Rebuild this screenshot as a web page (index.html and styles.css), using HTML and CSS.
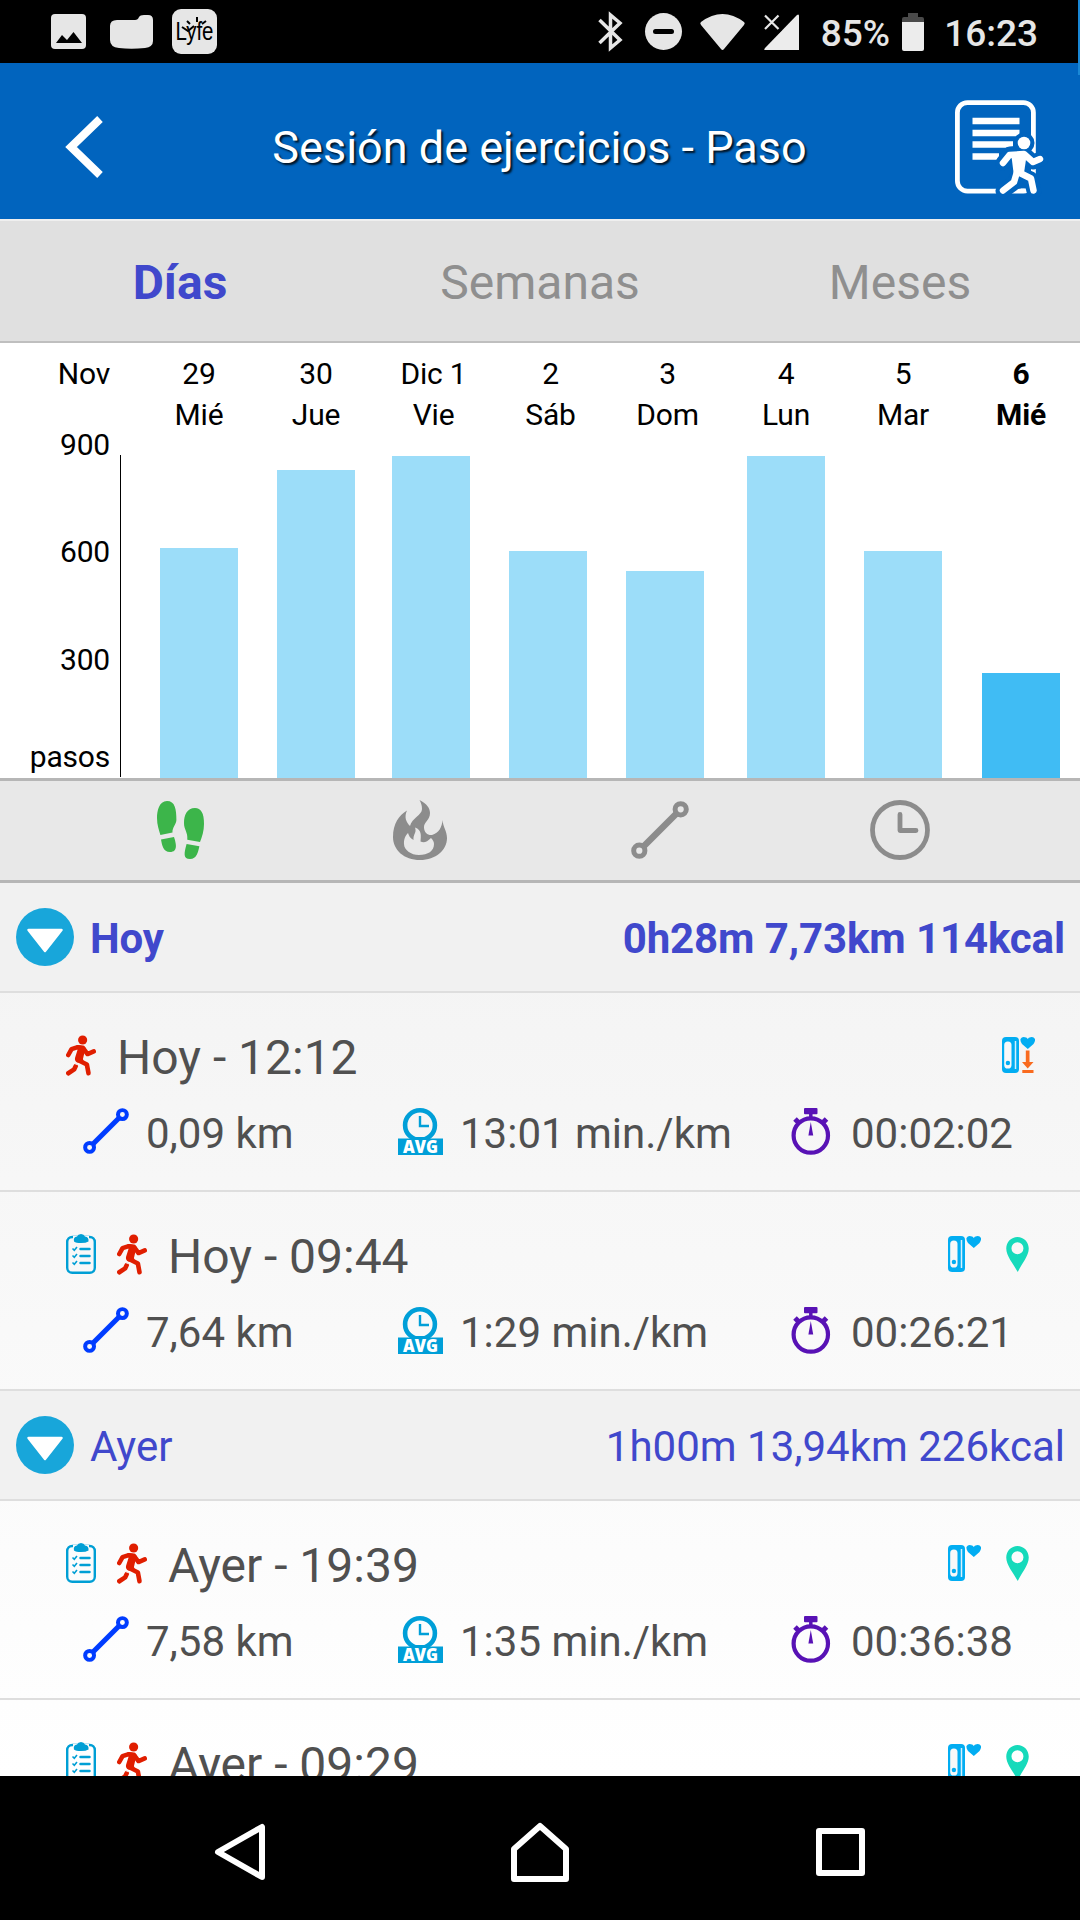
FILE: index.html
```html
<!DOCTYPE html>
<html lang="es">
<head>
    <meta charset="UTF-8">
    <meta name="viewport" content="width=device-width, initial-scale=1.0">
    <title>Sesión de ejercicios - Paso</title>
    <link rel="stylesheet" href="styles.css">
</head>
<body>
    <!-- shared icons -->
    <svg class="sprite">
        <symbol id="route" viewBox="0 0 58 58">
            <path d="M12 46L46 12" stroke="currentColor" stroke-width="6.5"/>
            <circle cx="8.3" cy="49.7" r="5.6" fill="none" stroke="currentColor" stroke-width="5"/>
            <circle cx="49.7" cy="8.3" r="5.6" fill="none" stroke="currentColor" stroke-width="5"/>
        </symbol>
        <symbol id="arrow" viewBox="0 0 58 58">
            <circle cx="29" cy="29" r="29" fill="#18a6da"/>
            <path d="M12.500 22H45.500L29 43z" fill="#fff" stroke="#fff" stroke-width="2.500" stroke-linejoin="round"/>
        </symbol>
        <symbol id="runner" viewBox="0 0 92 123">
            <circle cx="51" cy="14" r="14" fill="currentColor"/>
            <g fill="none" stroke="currentColor" stroke-width="14" stroke-linecap="round" stroke-linejoin="round">
                <path d="M7 60L17 42L36 36L52 38L66 57L85 49"/>
                <path d="M38 76L64 89L69 116"/>
                <path d="M30 94L25 104L7 116"/>
            </g>
            <path d="M31 31Q48 27 60 38L52 72L56 84L34 83Q25 78 28 68L36 42z" fill="currentColor"/>
            <path d="M20 84L44 93" stroke="#f9f9f9" stroke-width="3"/>
        </symbol>
        <symbol id="clipboard" viewBox="0 0 30 40">
            <rect x="1.200" y="3" width="27.600" height="35.800" rx="5" fill="none" stroke="#009fd5" stroke-width="2.400"/>
            <path d="M7 2H23V8H7z" fill="#f9f9f9"/>
            <path d="M8 7.500Q7 3 11 2.500Q12 0 15 0Q18 0 19 2.500Q23 3 22.500 7.500Q20 9 15 9Q10 9 8 7.500z" fill="#009fd5"/>
            <path d="M14.500 15H23.500M14.500 22H23.500M14.500 29H23.500" stroke="#009fd5" stroke-width="2.500" stroke-linecap="round"/>
            <path d="M6.500 14.500L8.300 16.300L11 13M6.500 21.500L8.300 23.300L11 20M6.500 28.500L8.300 30.300L11 27" fill="none" stroke="#009fd5" stroke-width="1.600"/>
        </symbol>
        <symbol id="avg" viewBox="0 0 45 47">
            <circle cx="22" cy="17.200" r="14.900" fill="none" stroke="#009fd8" stroke-width="4.600"/>
            <path d="M22 8V18H31" fill="none" stroke="#009fd8" stroke-width="2.400"/>
            <path d="M0 30.500H14L11 28L14 29H30L33 28L31 30.500H45V47H0z" fill="#009fd8"/>
            <text class="avg-text" x="22.500" y="44.700" text-anchor="middle" textLength="35" lengthAdjust="spacingAndGlyphs">AVG</text>
        </symbol>
        <symbol id="stopwatch" viewBox="0 0 46 47">
            <circle cx="22.800" cy="27.500" r="17.200" fill="none" stroke="currentColor" stroke-width="4.200"/>
            <rect x="16" y="0" width="13.500" height="6.200" rx="1" fill="currentColor"/>
            <path d="M22.800 5V9" stroke="currentColor" stroke-width="3.500"/>
            <path d="M7 11L11 15M38.500 11L34.500 15" stroke="currentColor" stroke-width="5"/>
            <path d="M22.800 14L25.200 27.500H20.400z" fill="currentColor"/>
        </symbol>
        <symbol id="band" viewBox="0 0 33 36">
            <rect width="17" height="36" rx="4" fill="#02adf2"/>
            <rect x="2.200" y="4.500" width="7.300" height="27" rx="3.600" fill="#f8f8f8"/>
            <path d="M13.500 4V32" stroke="#d6f1fc" stroke-width="1.500"/>
            <circle cx="5.900" cy="26" r="2.200" fill="#02adf2"/>
            <path d="M25.800 12L20 7Q18 4 18.500 2Q20 -0.500 23 0.300Q25 0.500 25.800 2Q26.500 0.500 28.500 0.300Q31.500 -0.500 33 2Q33.500 4 31.500 7z" fill="#02adf2"/>
        </symbol>
        <symbol id="pin" viewBox="0 0 22.500 35">
            <path fill-rule="evenodd" d="M11.200 0C17.500 0 22.500 5 22.500 11.500C22.500 19 16 26 11.500 35C6.500 26 0 19 0 11.500C0 5 5 0 11.200 0zM11.200 5.300A6 6 0 1 0 11.200 17.300A6 6 0 1 0 11.200 5.300z" fill="#16dabb"/>
        </symbol>
    </svg>

    <div class="status">
        <svg class="st-pic" viewBox="0 0 35 35"><rect width="35" height="35" rx="4" fill="#e6e6e6"/><path d="M5 29L11 21L16 26L22.500 18L31 29z" fill="#000"/></svg>
        <svg class="st-folder" viewBox="0 0 43 34"><path d="M0 11Q0 5 7 5H25Q28 5 29 2Q30 0 34 0H38Q43 0 43 5V26Q43 32 35 33Q21 34.500 9 33Q0 32 0 25z" fill="#e6e6e6"/></svg>
        <svg class="st-lyfe" viewBox="0 0 45 45">
            <rect width="45" height="45" rx="9" fill="#e6e6e6"/>
            <text class="lyfe-text" x="3.500" y="31" textLength="38" lengthAdjust="spacingAndGlyphs">Lyfe</text>
            <path d="M15 12L18 15M25 8V13M34 12L30 15M10 18L16 22L22 17" stroke="#000" stroke-width="2" fill="none"/>
        </svg>
        <div class="st-right">
            <svg class="st-bt" viewBox="0 0 24 37"><path d="M1.500 7L22 27L12.500 35V2L22 10L1.500 30" fill="none" stroke="#e6e6e6" stroke-width="3.500"/></svg>
            <svg class="st-dnd" viewBox="0 0 37 37"><circle cx="18.500" cy="18.500" r="18.500" fill="#e6e6e6"/><path d="M10.500 18.500H26.500" stroke="#000" stroke-width="5" stroke-linecap="round"/></svg>
            <svg class="st-wifi" viewBox="0 0 45 36"><path d="M1 8Q22.500 -8 44 8Q45.500 9 44 11L24 35Q22.500 37 21 35L1 11Q-0.500 9 1 8z" fill="#e6e6e6"/></svg>
            <svg class="st-signal" viewBox="0 0 35 36"><path d="M33 1Q35 -0.500 35 2V36H1Q-0.500 36 1 34z" fill="#ececec"/><path d="M0 0H18V16L14.500 19.500L0 16z" fill="#000"/><path d="M1 1.500L14.500 15M14.500 1.500L1 15" stroke="#e6e6e6" stroke-width="2.200"/></svg>
            <span class="st-percent">85%</span>
            <svg class="st-batt" viewBox="0 0 22 38"><path d="M0 10V6Q0 4 2 4H6V0H16V4H20Q22 4 22 6V10z" fill="#4a4a4a"/><path d="M0 9H22V36Q22 38 20 38H2Q0 38 0 36z" fill="#ececec"/></svg>
            <span class="st-time">16:23</span>
        </div>
    </div>

    <div class="header">
        <svg class="back" viewBox="0 0 38 62"><path d="M34 3L5 31L34 59" fill="none" stroke="#fff" stroke-width="8"/></svg>
        <h1 class="title">Sesión de ejercicios - Paso</h1>
        <svg class="plan" viewBox="0 0 89 95">
            <rect x="2.400" y="2.600" width="76" height="88.500" rx="10" fill="none" stroke="#fff" stroke-width="4.800"/>
            <path d="M17.500 21H64.500M17.500 33H64.500M17.500 44.500H58M17.500 56.500H44" stroke="#fff" stroke-width="6.500"/>
            <!-- gap around the runner -->
            <g fill="none" stroke="#0164be" stroke-width="15" stroke-linecap="round" stroke-linejoin="round">
                <path d="M48 63L55 54L68 53L78 62L86 59M65 55L63 73L76 79L79 91M63 74L60 82L48 91"/>
                <circle cx="69" cy="43" r="3"/>
            </g>
            <circle cx="69" cy="43" r="6.300" fill="#fff"/>
            <g fill="none" stroke="#fff" stroke-width="6.500" stroke-linecap="round" stroke-linejoin="round">
                <path d="M48 63L54.500 55L69 54L78 62L85 59"/>
                <path d="M63 72L76 78.500L78.500 90.500"/>
                <path d="M62 72L59 82L48 90.500"/>
            </g>
            <path d="M56 53L72 53L69 73L59 76z" fill="#fff"/>
            <path d="M59 93L66 88.500H69.500V93z" fill="#fff"/>
        </svg>
    </div>

    <div class="tabs">
        <div class="tab active">Días</div>
        <div class="tab">Semanas</div>
        <div class="tab">Meses</div>
    </div>

    <div class="chart">
        <div class="axis">
            <div class="axis-month">Nov</div>
            <div class="axis-900">900</div>
            <div class="axis-600">600</div>
            <div class="axis-300">300</div>
            <div class="axis-unit">pasos</div>
        </div>
        <div class="axis-line"></div>
        <div class="days">
            <div class="day"><span>29</span><span>Mié</span><div class="bar" style="height: 230px"></div></div>
            <div class="day"><span>30</span><span>Jue</span><div class="bar" style="height: 308px"></div></div>
            <div class="day nudge"><span>Dic 1</span><span>Vie</span><div class="bar" style="height: 322px"></div></div>
            <div class="day nudge"><span>2</span><span>Sáb</span><div class="bar" style="height: 227px"></div></div>
            <div class="day nudge"><span>3</span><span>Dom</span><div class="bar" style="height: 207px"></div></div>
            <div class="day"><span>4</span><span>Lun</span><div class="bar" style="height: 322px"></div></div>
            <div class="day"><span>5</span><span>Mar</span><div class="bar" style="height: 227px"></div></div>
            <div class="day today"><span>6</span><span>Mié</span><div class="bar" style="height: 105px"></div></div>
        </div>
    </div>

    <div class="metrics">
        <svg class="m-steps" viewBox="0 0 47 58" fill="#3cb54a">
            <path d="M3.400 34L15.500 31.500C15 27 19.400 23 19.400 19C19.400 8 18 0 10 0C2 0 0 10 0 17C0 24 2 29 3.400 34z"/>
            <path d="M4 38.500L17 36C19 42 21.500 51 13 51C6 51 5 44 4 38.500z"/>
            <path d="M30.300 38.700L43 41C45 36 47 30 47 23C47 12 44 7 38 7C30 7 27 14 27 22C27 29 31 31 30.300 38.700z"/>
            <path d="M29.600 43L42.400 45.300C41 51 40 58 33 58C26 58 27 52 29.600 43z"/>
        </svg>
        <svg class="m-fire" viewBox="0 0 54 60">
            <path fill-rule="evenodd" fill="#8c8c8c" d="M26.500 0C34 4 37 8 37 13C37 20 31 22 31 27C31 33 35 35.500 39 35C46 33 49 27 49.500 20C50 27 54 31 54 38C54 50 43 60 27 60C11 60 0 50 0 37C0 24 6 15 14 10.500C11 17 13 22 17 26C19 18 29 15 29 9C29 5 28 3 26.500 0zM15 33C11 37 11 41 11 44C11 50 18 55 26 55C35 55 41 51 41 44C41 42 40 40 38 38C34 42 31 43 27.500 41.500C28 36 29 30 22 27.500C24 33 20 34 20.500 40C17 38 16 36 15 33z"/>
        </svg>
        <svg class="m-route"><use href="#route"/></svg>
        <svg class="m-clock" viewBox="0 0 60 60" fill="none" stroke="#8c8c8c" stroke-width="4.800" stroke-linecap="round" stroke-linejoin="round">
            <circle cx="30" cy="30" r="27.500"/>
            <path d="M30 14.500V30.500H46"/>
        </svg>
    </div>

    <div class="list">
        <div class="group bold">
            <svg class="toggle"><use href="#arrow"/></svg>
            <span>Hoy</span>
            <span class="total">0h28m 7,73km 114kcal</span>
        </div>
        <div class="session">
            <div class="top">
                <svg class="run"><use href="#runner"/></svg>
                <span class="name">Hoy - 12:12</span>
                <svg class="band" viewBox="0 0 33 36">
                    <use href="#band"/>
                    <path d="M23.800 13.500H27.500V25H31.500L25.700 31.500L20 25H23.800zM20.300 33H31.500V36H20.300z" fill="#f96b1f"/>
                </svg>
            </div>
            <div class="stats">
                <div class="stat"><svg class="i-route"><use href="#route"/></svg><span>0,09 km</span></div>
                <div class="stat"><svg class="i-avg"><use href="#avg"/></svg><span>13:01 min./km</span></div>
                <div class="stat"><svg class="i-watch"><use href="#stopwatch"/></svg><span>00:02:02</span></div>
            </div>
        </div>
        <div class="session">
            <div class="top">
                <svg class="clip"><use href="#clipboard"/></svg>
                <svg class="run"><use href="#runner"/></svg>
                <span class="name">Hoy - 09:44</span>
                <svg class="band"><use href="#band"/></svg>
                <svg class="pin"><use href="#pin"/></svg>
            </div>
            <div class="stats">
                <div class="stat"><svg class="i-route"><use href="#route"/></svg><span>7,64 km</span></div>
                <div class="stat"><svg class="i-avg"><use href="#avg"/></svg><span>1:29 min./km</span></div>
                <div class="stat"><svg class="i-watch"><use href="#stopwatch"/></svg><span>00:26:21</span></div>
            </div>
        </div>
        <div class="group">
            <svg class="toggle"><use href="#arrow"/></svg>
            <span>Ayer</span>
            <span class="total">1h00m 13,94km 226kcal</span>
        </div>
        <div class="session">
            <div class="top">
                <svg class="clip"><use href="#clipboard"/></svg>
                <svg class="run"><use href="#runner"/></svg>
                <span class="name">Ayer - 19:39</span>
                <svg class="band"><use href="#band"/></svg>
                <svg class="pin"><use href="#pin"/></svg>
            </div>
            <div class="stats">
                <div class="stat"><svg class="i-route"><use href="#route"/></svg><span>7,58 km</span></div>
                <div class="stat"><svg class="i-avg"><use href="#avg"/></svg><span>1:35 min./km</span></div>
                <div class="stat"><svg class="i-watch"><use href="#stopwatch"/></svg><span>00:36:38</span></div>
            </div>
        </div>
        <div class="session">
            <div class="top">
                <svg class="clip"><use href="#clipboard"/></svg>
                <svg class="run"><use href="#runner"/></svg>
                <span class="name">Ayer - 09:29</span>
                <svg class="band"><use href="#band"/></svg>
                <svg class="pin"><use href="#pin"/></svg>
            </div>
        </div>
    </div>

    <div class="navbar">
        <svg viewBox="0 0 60 60"><path d="M52 5V55L8 30z"/></svg>
        <svg viewBox="0 0 60 60"><path d="M4 57V27L30 4L56 27V57z"/></svg>
        <svg viewBox="0 0 60 60"><path d="M9 9H52V51H9z"/></svg>
    </div>
    <div class="edge"></div>
</body>
</html>
```
FILE: styles.css
```css
* {
    margin: 0;
    padding: 0;
    box-sizing: border-box;
}
body {
    width: 1080px;
    height: 1920px;
    display: flex;
    flex-direction: column;
    position: relative;
    overflow: hidden;
    background: #fff;
    font-family: Roboto, sans-serif;
}
svg {
    display: block;
    flex: none;
    overflow: visible;
}
.sprite {
    position: absolute;
    width: 0;
    height: 0;
}

/* status bar */
.status {
    height: 63px;
    flex: none;
    display: flex;
    align-items: center;
    padding: 0 42px 0 51px;
    background: #000;
    color: #e6e6e6;
    font-size: 37px;
    font-weight: 500;
}
.st-pic {
    width: 35px;
    height: 35px;
}
.st-folder {
    width: 43px;
    height: 34px;
    margin-left: 24px;
}
.st-lyfe {
    width: 45px;
    height: 45px;
    margin-left: 19px;
}
.lyfe-text {
    font: 25px "Liberation Sans", sans-serif;
}
.st-right {
    display: flex;
    align-items: center;
    margin-left: auto;
}
.st-bt {
    width: 24px;
    height: 37px;
}
.st-dnd {
    width: 37px;
    height: 37px;
    margin-left: 23px;
}
.st-wifi {
    width: 45px;
    height: 36px;
    margin-left: 18px;
}
.st-signal {
    width: 35px;
    height: 36px;
    margin-left: 19px;
}
.st-percent {
    margin-left: 22px;
    padding-top: 4px;
}
.st-batt {
    width: 22px;
    height: 38px;
    margin-left: 12px;
}
.st-time {
    margin-left: 20px;
    padding-top: 4px;
}

/* header */
.header {
    height: 158px;
    flex: none;
    display: flex;
    align-items: center;
    padding: 0 36px 0 66px;
    background: #0164be;
    border-bottom: 2px solid #efefef;
}
.back {
    width: 38px;
    height: 62px;
    margin-top: 12px;
}
.title {
    flex: 1;
    padding: 12px 0 0 20px;
    text-align: center;
    color: #fff;
    font-size: 45px;
    font-weight: 400;
    text-shadow: 2px 2px 2px rgba(0, 0, 0, 0.8);
}
.plan {
    width: 89px;
    height: 95px;
    margin-top: 12px;
}

/* tabs */
.tabs {
    height: 122px;
    flex: none;
    display: flex;
    align-items: center;
    padding-top: 3px;
    background: #e0e0e0;
    border-bottom: 2px solid #bfbfbf;
}
.tab {
    flex: 1;
    text-align: center;
    font-size: 48px;
    color: #8f8f8f;
}
.tab.active {
    color: #4048cc;
    font-weight: 700;
}

/* chart */
.chart {
    height: 435px;
    flex: none;
    display: flex;
    padding-top: 10px;
    font-size: 30px;
    line-height: 40px;
    color: #000;
}
.axis {
    width: 110px;
    text-align: right;
    letter-spacing: -0.2px;
}
.axis-month {
    line-height: 41px;
}
.axis-900 {
    margin-top: 31px;
}
.axis-600 {
    margin-top: 67px;
}
.axis-300 {
    margin-top: 68px;
}
.axis-unit {
    margin-top: 57px;
}
.axis-line {
    width: 1px;
    margin: 102px 39px 1px 10px;
    background: #000;
}
.days {
    display: grid;
    grid-template-columns: 117px 115px 117px 117px 121px 117px 118px 78px;
}
.day {
    width: 78px;
    display: flex;
    flex-direction: column;
    align-items: center;
    line-height: 41px;
    letter-spacing: -0.2px;
}
.nudge span {
    padding-left: 5px;
}
.bar {
    width: 78px;
    margin-top: auto;
    background: #9cddf9;
}
.today {
    font-weight: 700;
}
.today .bar {
    background: #40bcf4;
}

/* metric selector */
.metrics {
    height: 105px;
    flex: none;
    display: grid;
    grid-template-columns: repeat(4, 240px);
    justify-content: center;
    justify-items: center;
    align-items: center;
    padding-bottom: 2px;
    background: #e8e8e8;
    border-top: 3px solid #b6b6b6;
    border-bottom: 3px solid #b6b6b6;
    color: #8c8c8c;
}
.m-steps {
    width: 47px;
    height: 58px;
}
.m-fire {
    width: 54px;
    height: 60px;
}
.m-route {
    width: 58px;
    height: 58px;
}
.m-clock {
    width: 60px;
    height: 60px;
}

/* session list */
.list {
    flex: 1;
    overflow: hidden;
    background: linear-gradient(#f3f3f3, #fff);
}
.group {
    height: 110px;
    display: flex;
    align-items: center;
    padding: 0 15px 0 16px;
    background: #f1f1f1;
    border-bottom: 2px solid #dedede;
    color: #4048cc;
    font-size: 42px;
}
.group span {
    padding-top: 3px;
}
.bold {
    font-weight: 700;
    letter-spacing: -0.1px;
}
.toggle {
    width: 58px;
    height: 58px;
    margin-right: 16px;
}
.group .total {
    margin-left: auto;
}
.session {
    height: 199px;
    padding: 34px 45px 0 66px;
    border-bottom: 2px solid #dedede;
    color: #505050;
}
.top {
    height: 56px;
    display: flex;
    align-items: center;
}
.run {
    width: 30px;
    height: 41px;
    color: #e01e00;
}
.clip {
    width: 30px;
    height: 40px;
    margin-right: 21px;
}
.name {
    padding: 5px 0 0 21px;
    margin-right: auto;
    font-size: 48px;
}
.band {
    width: 33px;
    height: 36px;
}
.pin {
    width: 23px;
    height: 35px;
    margin: 0 6px 0 25px;
}
.stats {
    display: grid;
    grid-template-columns: 315px 390px 1fr;
    padding: 22px 0 0 17px;
}
.stat {
    height: 52px;
    display: flex;
    align-items: center;
    gap: 17px;
    font-size: 42px;
}
.stat span {
    padding-top: 5px;
    white-space: nowrap;
}
.i-route {
    width: 46px;
    height: 46px;
    color: #003cff;
}
.i-avg {
    width: 45px;
    height: 47px;
}
.i-watch {
    width: 46px;
    height: 47px;
    color: #5812b5;
}
.avg-text {
    font: 800 17px "Open Sans", sans-serif;
    fill: #fff;
}

/* system navigation */
.navbar {
    height: 144px;
    flex: none;
    display: grid;
    grid-template-columns: repeat(3, 300px);
    justify-content: center;
    justify-items: center;
    align-items: center;
    padding-top: 8px;
    background: #000;
}
.navbar svg {
    width: 60px;
    height: 60px;
    fill: none;
    stroke: #fff;
    stroke-width: 6;
    stroke-linejoin: round;
}

/* scroll hint on the right edge */
.edge {
    position: absolute;
    top: 0;
    right: 0;
    width: 2px;
    height: 75px;
    background: #1a88d6;
}
```
